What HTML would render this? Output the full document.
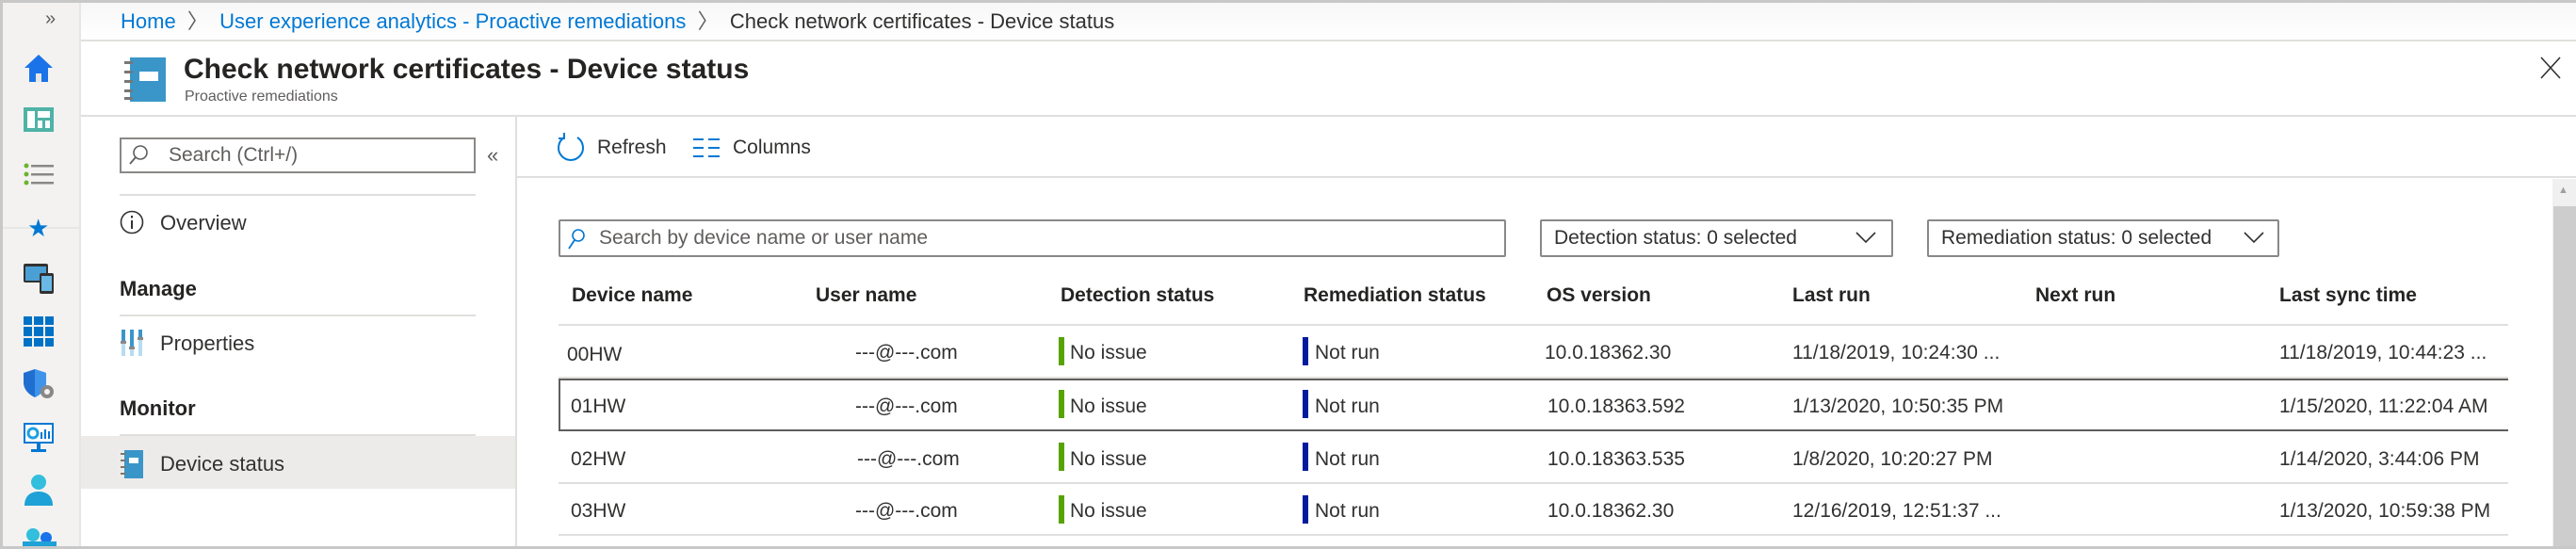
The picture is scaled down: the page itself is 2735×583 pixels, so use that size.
<!DOCTYPE html>
<html><head><meta charset="utf-8"><style>
*{margin:0;padding:0;box-sizing:border-box}
body{width:2735px;height:583px;overflow:hidden;background:#fff;font-family:"Liberation Sans",sans-serif;color:#323130;position:relative}
.a{position:absolute;white-space:nowrap}
.t{font-size:21px;line-height:24px}
.hd{font-size:21px;font-weight:bold;color:#252423}
.line{position:absolute;height:2px;background:#e1dfdd}
.bar{position:absolute;width:6px;height:30px}
</style></head><body>
<div class="a" style="left:0;top:0;width:2735px;height:3px;background:#c8c8c8"></div>
<div class="a" style="left:0;top:0;width:3px;height:583px;background:#c8c8c8"></div>
<div class="a" style="left:0;top:580px;width:2735px;height:3px;background:#c8c8c8"></div>
<div class="a" style="left:3px;top:3px;width:81px;height:577px;background:#f3f2f1"></div>
<div class="a" style="left:84px;top:3px;width:2px;height:577px;background:#e6e6e6"></div>
<div class="a" style="left:48px;top:9px;font-size:20px;color:#605e5c">»</div>
<div class="a" style="left:3px;top:241px;width:81px;height:2px;background:#e6e6e6"></div>
<svg class="a" style="left:24px;top:55px" width="34" height="34" viewBox="0 0 34 34"><path d="M17 3L2 17h5v15h7v-9h6v9h7V17h5z" fill="#1a73e8"/><rect x="14" y="23" width="6" height="9" fill="#e6e6e6"/></svg>
<svg class="a" style="left:25px;top:114px" width="32" height="26"><rect width="32" height="26" fill="#4fb3a6"/><rect x="4" y="4" width="8" height="18" fill="#fff"/><rect x="15" y="4" width="13" height="7" fill="#fff"/><rect x="15" y="14" width="5" height="8" fill="#fff"/><rect x="23" y="14" width="5" height="8" fill="#fff"/></svg>
<svg class="a" style="left:25px;top:172px" width="32" height="26"><circle cx="3" cy="4" r="2.5" fill="#6bb42d"/><circle cx="3" cy="13" r="2.5" fill="#6bb42d"/><circle cx="3" cy="22" r="2.5" fill="#6bb42d"/><rect x="8" y="3" width="24" height="2.5" fill="#8a8886"/><rect x="8" y="12" width="24" height="2.5" fill="#8a8886"/><rect x="8" y="21" width="24" height="2.5" fill="#8a8886"/></svg>
<div class="a" style="left:29px;top:227px;font-size:26px;color:#0078d4">★</div>
<svg class="a" style="left:25px;top:280px" width="32" height="32"><rect x="0" y="0" width="26" height="20" rx="2" fill="#323130"/><rect x="2" y="3" width="22" height="15" fill="#4aa0d5"/><rect x="17" y="10" width="15" height="22" rx="2" fill="#323130"/><rect x="19" y="13" width="11" height="16" fill="#69b8e5"/></svg>
<svg class="a" style="left:25px;top:336px" width="32" height="32" fill="#0072c6"><rect x="0" y="0" width="9" height="9"/><rect x="11" y="0" width="10" height="9"/><rect x="23" y="0" width="9" height="9"/><rect x="0" y="11" width="9" height="10"/><rect x="11" y="11" width="10" height="10"/><rect x="23" y="11" width="9" height="10"/><rect x="0" y="23" width="9" height="9"/><rect x="11" y="23" width="10" height="9"/><rect x="23" y="23" width="9" height="9"/></svg>
<svg class="a" style="left:24px;top:391px" width="36" height="34"><path d="M13 1L1 5v10c0 8 6 13 12 16 6-3 12-8 12-16V5z" fill="#1f6fd1"/><path d="M13 1v30c6-3 12-8 12-16V5z" fill="#3f94ea"/><circle cx="26" cy="25" r="7" fill="#8a8886"/><circle cx="26" cy="25" r="3" fill="#f3f2f1"/></svg>
<svg class="a" style="left:25px;top:449px" width="32" height="32"><rect width="32" height="22" fill="#0078d4"/><rect x="2" y="2" width="28" height="18" fill="#fff"/><circle cx="10" cy="11" r="5" fill="none" stroke="#1ea1e0" stroke-width="3"/><rect x="18" y="10" width="2" height="7" fill="#0078d4"/><rect x="22" y="7" width="2" height="10" fill="#0078d4"/><rect x="26" y="9" width="2" height="8" fill="#0078d4"/><rect x="14" y="22" width="4" height="6" fill="#0078d4"/><rect x="8" y="28" width="16" height="3" fill="#0078d4"/></svg>
<svg class="a" style="left:26px;top:503px" width="30" height="34"><circle cx="15" cy="9" r="8" fill="#32bedd"/><path d="M0 34c0-10 6-15 15-15s15 5 15 15z" fill="#1ea1d6"/></svg>
<svg class="a" style="left:24px;top:560px" width="36" height="20"><circle cx="11" cy="8" r="7" fill="#32bedd"/><circle cx="25" cy="11" r="6" fill="#1a73e8"/><rect x="0" y="15" width="36" height="5" fill="#1ea1d6"/></svg>
<div class="a" style="left:86px;top:3px;width:2649px;height:40px;background:linear-gradient(#f7f7f7,#fff)"></div>
<div class="a" style="left:86px;top:42px;width:2649px;height:2px;background:#e1dfdd"></div>
<div class="a" style="left:128px;top:9px;font-size:22px;line-height:28px;color:#0078d4">Home <span style="color:#605e5c">&nbsp;〉</span>&nbsp; User experience analytics - Proactive remediations <span style="color:#605e5c">&nbsp;〉</span>&nbsp; <span style="color:#323130">Check network certificates - Device status</span></div>
<svg class="a" style="left:132px;top:61px" width="44" height="47"><rect x="6" y="0" width="38" height="47" fill="#3a96c8"/><rect x="16" y="15" width="20" height="10" fill="#fff"/><g fill="#777"><rect x="0" y="4" width="9" height="3"/><rect x="0" y="14" width="9" height="3"/><rect x="0" y="24" width="9" height="3"/><rect x="0" y="34" width="9" height="3"/><rect x="0" y="42" width="9" height="3"/></g></svg>
<div class="a" style="left:195px;top:55px;font-size:30px;line-height:38px;font-weight:bold;color:#252423">Check network certificates - Device status</div>
<div class="a" style="left:196px;top:93px;font-size:16px;line-height:20px;color:#605e5c">Proactive remediations</div>
<svg class="a" style="left:2697px;top:60px" width="22" height="24"><path d="M1 1l20 22M21 1L1 23" stroke="#323130" stroke-width="1.6" fill="none"/></svg>
<div class="a" style="left:86px;top:122px;width:2649px;height:2px;background:#e1dfdd"></div>
<div class="a" style="left:547px;top:124px;width:2px;height:456px;background:#e1dfdd"></div>
<div class="a" style="left:127px;top:146px;width:378px;height:38px;border:2px solid #8a8886"></div>
<svg class="a" style="left:136px;top:153px" width="22" height="24"><circle cx="13" cy="9" r="7" fill="none" stroke="#605e5c" stroke-width="1.6"/><path d="M8 14L2 21" stroke="#605e5c" stroke-width="1.8"/></svg>
<div class="a" style="left:179px;top:153px;font-size:21px;color:#605e5c">Search (Ctrl+/)</div>
<div class="a" style="left:517px;top:152px;font-size:22px;color:#605e5c">«</div>
<div class="line" style="left:127px;top:206px;width:378px"></div>
<svg class="a" style="left:127px;top:223px" width="26" height="26"><circle cx="13" cy="13" r="11.5" fill="none" stroke="#323130" stroke-width="1.6"/><rect x="12" y="11" width="2" height="9" fill="#323130"/><rect x="12" y="6" width="2" height="2.5" fill="#323130"/></svg>
<div class="a t" style="left:170px;top:225px;font-size:22px">Overview</div>
<div class="a" style="left:127px;top:294px;font-size:22px;font-weight:bold;color:#252423">Manage</div>
<div class="line" style="left:127px;top:334px;width:378px"></div>
<svg class="a" style="left:128px;top:350px" width="24" height="28"><g fill="#b7dcef"><rect x="1" y="0" width="4" height="28"/><rect x="10" y="0" width="4" height="28"/><rect x="19" y="0" width="4" height="28"/></g><g fill="#3a96c8"><rect x="1" y="0" width="4" height="12"/><rect x="10" y="0" width="4" height="18"/><rect x="19" y="0" width="4" height="8"/></g><g fill="#8a8886"><rect x="0" y="12" width="6" height="3"/><rect x="9" y="18" width="6" height="3"/><rect x="18" y="8" width="6" height="3"/></g></svg>
<div class="a t" style="left:170px;top:353px;font-size:22px">Properties</div>
<div class="a" style="left:127px;top:421px;font-size:22px;font-weight:bold;color:#252423">Monitor</div>
<div class="line" style="left:127px;top:461px;width:378px"></div>
<div class="a" style="left:86px;top:463px;width:461px;height:56px;background:#edebe9"></div>
<svg class="a" style="left:128px;top:478px" width="24" height="30"><rect x="4" y="0" width="20" height="30" fill="#3a96c8"/><rect x="9" y="8" width="10" height="6" fill="#fff"/><g fill="#777"><rect x="0" y="3" width="6" height="2"/><rect x="0" y="10" width="6" height="2"/><rect x="0" y="17" width="6" height="2"/><rect x="0" y="24" width="6" height="2"/></g></svg>
<div class="a t" style="left:170px;top:481px;font-size:22px">Device status</div>
<svg class="a" style="left:590px;top:140px" width="32" height="32"><path d="M9 6A13 13 0 1 0 23 6" fill="none" stroke="#0078d4" stroke-width="2"/><path d="M9 1v6H3" fill="none" stroke="#0078d4" stroke-width="2"/></svg>
<div class="a t" style="left:634px;top:145px">Refresh</div>
<svg class="a" style="left:736px;top:146px" width="28" height="22" fill="#0078d4"><rect x="0" y="1" width="11" height="2"/><rect x="16" y="1" width="12" height="2"/><rect x="0" y="10" width="11" height="2"/><rect x="16" y="10" width="12" height="2"/><rect x="0" y="19" width="11" height="2"/><rect x="16" y="19" width="12" height="2"/></svg>
<div class="a t" style="left:778px;top:145px">Columns</div>
<div class="a" style="left:549px;top:187px;width:2186px;height:2px;background:#e1dfdd"></div>
<div class="a" style="left:2710px;top:190px;width:25px;height:390px;background:#f0f0f0"></div>
<div class="a" style="left:2711px;top:219px;width:24px;height:361px;background:#cdcdcd"></div>
<div class="a" style="left:2716px;top:196px;font-size:11px;color:#a0a0a0">▲</div>
<div class="a" style="left:593px;top:233px;width:1006px;height:40px;border:2px solid #8a8886;border-radius:2px"></div>
<svg class="a" style="left:601px;top:242px" width="22" height="24"><circle cx="13" cy="8" r="6" fill="none" stroke="#0078d4" stroke-width="1.6"/><path d="M9 13L3 22" stroke="#0078d4" stroke-width="1.8"/></svg>
<div class="a t" style="left:636px;top:241px;color:#605e5c">Search by device name or user name</div>
<div class="a" style="left:1635px;top:233px;width:375px;height:40px;border:2px solid #8a8886;border-radius:2px"></div>
<div class="a t" style="left:1650px;top:241px;color:#323130">Detection status: 0 selected</div>
<svg class="a" style="left:1970px;top:245px" width="22" height="14"><path d="M1 2l10 10L21 2" fill="none" stroke="#323130" stroke-width="1.6"/></svg>
<div class="a" style="left:2046px;top:233px;width:374px;height:40px;border:2px solid #8a8886;border-radius:2px"></div>
<div class="a t" style="left:2061px;top:241px;color:#323130">Remediation status: 0 selected</div>
<svg class="a" style="left:2382px;top:245px" width="22" height="14"><path d="M1 2l10 10L21 2" fill="none" stroke="#323130" stroke-width="1.6"/></svg>
<div class="a hd" style="left:607px;top:302px">Device name</div>
<div class="a hd" style="left:866px;top:302px">User name</div>
<div class="a hd" style="left:1126px;top:302px">Detection status</div>
<div class="a hd" style="left:1384px;top:302px">Remediation status</div>
<div class="a hd" style="left:1642px;top:302px">OS version</div>
<div class="a hd" style="left:1903px;top:302px">Last run</div>
<div class="a hd" style="left:2161px;top:302px">Next run</div>
<div class="a hd" style="left:2420px;top:302px">Last sync time</div>
<div class="line" style="left:593px;top:344px;width:2070px"></div>
<div class="line" style="left:593px;top:400px;width:2070px"></div>
<div class="a" style="left:593px;top:402px;width:2070px;height:56px;border:2px solid #605e5c;border-right:none"></div>
<div class="line" style="left:593px;top:512px;width:2070px"></div>
<div class="line" style="left:593px;top:567px;width:2070px"></div>

<div class="a t" style="left:602px;top:365px">00HW</div>
<div class="a t" style="left:908px;top:363px">---@---.com</div>
<div class="bar" style="left:1124px;top:358px;background:#57a300"></div><div class="a t" style="left:1136px;top:363px">No issue</div>
<div class="bar" style="left:1383px;top:358px;background:#001c9c"></div><div class="a t" style="left:1396px;top:363px">Not run</div>
<div class="a t" style="left:1640px;top:363px">10.0.18362.30</div>
<div class="a t" style="left:1903px;top:363px">11/18/2019, 10:24:30 ...</div>
<div class="a t" style="left:2420px;top:363px">11/18/2019, 10:44:23 ...</div>

<div class="a t" style="left:606px;top:420px">01HW</div>
<div class="a t" style="left:908px;top:420px">---@---.com</div>
<div class="bar" style="left:1124px;top:414px;background:#57a300"></div><div class="a t" style="left:1136px;top:420px">No issue</div>
<div class="bar" style="left:1383px;top:414px;background:#001c9c"></div><div class="a t" style="left:1396px;top:420px">Not run</div>
<div class="a t" style="left:1643px;top:420px">10.0.18363.592</div>
<div class="a t" style="left:1903px;top:420px">1/13/2020, 10:50:35 PM</div>
<div class="a t" style="left:2420px;top:420px">1/15/2020, 11:22:04 AM</div>

<div class="a t" style="left:606px;top:476px">02HW</div>
<div class="a t" style="left:910px;top:476px">---@---.com</div>
<div class="bar" style="left:1124px;top:470px;background:#57a300"></div><div class="a t" style="left:1136px;top:476px">No issue</div>
<div class="bar" style="left:1383px;top:470px;background:#001c9c"></div><div class="a t" style="left:1396px;top:476px">Not run</div>
<div class="a t" style="left:1643px;top:476px">10.0.18363.535</div>
<div class="a t" style="left:1903px;top:476px">1/8/2020, 10:20:27 PM</div>
<div class="a t" style="left:2420px;top:476px">1/14/2020, 3:44:06 PM</div>

<div class="a t" style="left:606px;top:531px">03HW</div>
<div class="a t" style="left:908px;top:531px">---@---.com</div>
<div class="bar" style="left:1124px;top:526px;background:#57a300"></div><div class="a t" style="left:1136px;top:531px">No issue</div>
<div class="bar" style="left:1383px;top:526px;background:#001c9c"></div><div class="a t" style="left:1396px;top:531px">Not run</div>
<div class="a t" style="left:1643px;top:531px">10.0.18362.30</div>
<div class="a t" style="left:1903px;top:531px">12/16/2019, 12:51:37 ...</div>
<div class="a t" style="left:2420px;top:531px">1/13/2020, 10:59:38 PM</div>
</body></html>
